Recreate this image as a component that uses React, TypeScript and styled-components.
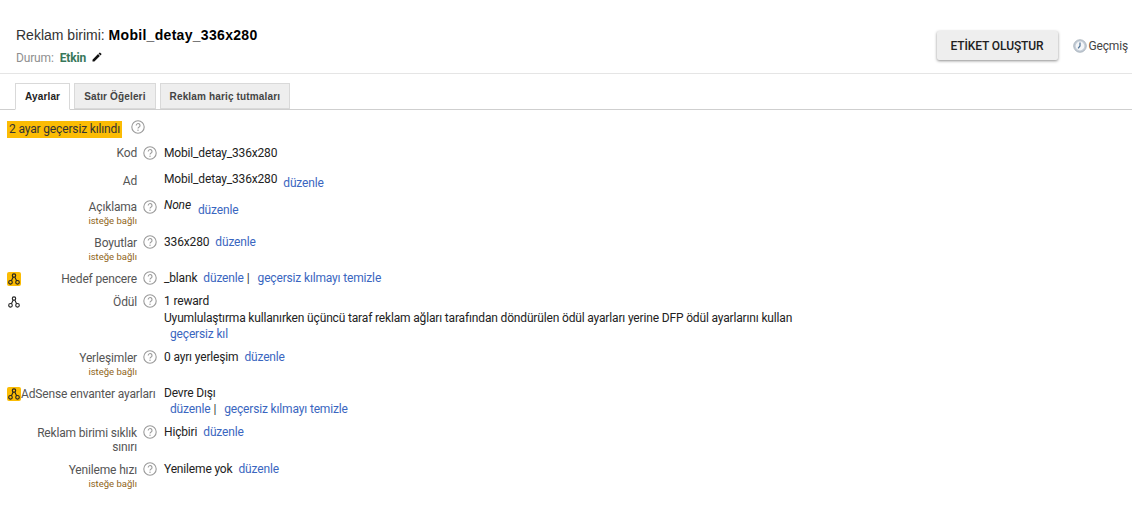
import React from "react";
import styled, { createGlobalStyle } from "styled-components";

const Global = createGlobalStyle`
  html, body { margin: 0; padding: 0; background: #fff; }
  body { font-family: Roboto, "Liberation Sans", sans-serif; font-size: 12px; color: #222; overflow: hidden; letter-spacing: -0.16px; }
`;
const Page = styled.div`width: 1132px; height: 526px; overflow: hidden; background: #fff;`;
const Header = styled.header`
  height: 74px; box-sizing: border-box; border-bottom: 1px solid #e5e5e5;
  display: flex; justify-content: space-between; padding: 26px 4px 0 16px;
`;
const TitleBlock = styled.div`display: flex; flex-direction: column; gap: 7px;`;
const Title = styled.div`font-size: 14px; line-height: 18px; color: #333; font-family: "Liberation Sans", Arial, sans-serif; letter-spacing: 0;`;
const TitleName = styled.b`color: #000; letter-spacing: 0.3px;`;
const Status = styled.div`font-size: 12px; line-height: 14px; color: #8f8f8f; display: flex; align-items: center; gap: 6px;`;
const StatusValue = styled.b`color: #38775a; font-weight: 700;`;
const Actions = styled.div`display: flex; align-items: flex-start; gap: 15px; margin-top: 5px;`;
const CreateButton = styled.button`
  width: 121px; height: 29px; border: 0; border-radius: 2px; background: #eeeeee; color: #212121;
  font: 500 12px Roboto, sans-serif; letter-spacing: -0.1px; box-shadow: 0 1px 3px rgba(0,0,0,.45); padding: 0;
`;
const History = styled.div`display: flex; align-items: center; gap: 2px; height: 29px; color: #444; font-size: 12px;`;
const Tabs = styled.nav`
  height: 36px; box-sizing: border-box; border-bottom: 1px solid #cfcfcf; padding: 9px 0 0 15px;
  display: flex; align-items: flex-start; gap: 4px;
`;
const Tab = styled.div<{ $active?: boolean }>`
  height: ${p => (p.$active ? 27 : 26)}px; box-sizing: border-box; padding: 0 9px;
  display: flex; align-items: center; font: 700 10px "Liberation Sans", Arial, sans-serif; letter-spacing: .15px;
  border: 1px solid #d9d9d9; color: ${p => (p.$active ? "#222" : "#444")};
  background: ${p => (p.$active ? "#fff" : "#eeeeee")};
  ${p => p.$active && "border-bottom-color: #fff;"}
`;
const Content = styled.main`padding-top: 10px;`;
const Banner = styled.div`height: 26px; padding-left: 7px; display: flex; align-items: flex-start; gap: 9px;`;
const Override = styled.span`background: #fbbc04; color: #333; line-height: 17px; height: 17px; padding: 0 2px; margin-top: 1px; letter-spacing: -.15px;`;
const Badge = styled.span<{ $on?: boolean }>`
  width: 14px; height: 14px; border-radius: 2px; display: flex; align-items: center; justify-content: center;
  background: ${p => (p.$on ? "#fbbc04" : "transparent")};
`;
const Label = styled.div`text-align: right; color: #555; line-height: 14px;`;
const WideLabel = styled.div`grid-column: span 2; color: #555; white-space: nowrap;`;
const Optional = styled.div`font-size: 9.5px; line-height: 12px; color: #8f6420; margin-top: 1px; letter-spacing: 0;`;
const HelpSlot = styled.span`padding-left: 6px; display: block; height: 14px;`;
const Value = styled.div`color: #222; white-space: nowrap; line-height: 14px;`;
const Row = styled.section<{ $h: number; $raised?: boolean }>`
  display: grid; grid-template-columns: 14px 116px 27px 1fr; min-height: ${p => p.$h}px;
  padding-left: 7px; align-content: start; line-height: 14px;
  ${HelpSlot}, ${Value} { margin-top: ${p => (p.$raised ? -1 : 0)}px; }
`;
const Line = styled.div<{ $indent?: boolean; $top?: number }>`
  display: flex; align-items: flex-start; margin-left: ${p => (p.$indent ? 6 : 0)}px; margin-top: ${p => p.$top ?? 0}px;
`;
const Edit = styled.a<{ $left?: number; $drop?: number }>`
  color: #3a66c0; margin-left: ${p => p.$left ?? 6}px; margin-top: ${p => p.$drop ?? 0}px; cursor: pointer;
`;
const Sep = styled.span`margin-left: 3px; color: #333;`;
const Italic = styled.span`font-style: italic; width: 28px; overflow: hidden; display: inline-block; margin-top: -2px;`;

const Help = ({ size = 14 }: { size?: number }) => (
  <svg width={size} height={size} viewBox="0 0 14 14">
    <circle cx="7" cy="7" r="6.2" fill="none" stroke="#9a9a9a" strokeWidth="1.1" />
    <path d="M5.2 5.5a1.9 1.9 0 1 1 2.9 1.6c-.7.4-1.1.8-1.1 1.5" fill="none" stroke="#9a9a9a" strokeWidth="1.1" />
    <circle cx="7" cy="10.3" r=".7" fill="#9a9a9a" />
  </svg>
);
const Nodes = () => (
  <svg width="12" height="12" viewBox="0 0 12 12" fill="none" stroke="#222" strokeWidth="1.1">
    <circle cx="6" cy="2.6" r="1.7" />
    <circle cx="2.5" cy="9.3" r="1.8" />
    <circle cx="9.5" cy="9.3" r="1.8" />
    <path d="M5.2 4.1 3.4 7.7M6.8 4.1l1.8 3.6" />
  </svg>
);
const Pencil = () => (
  <svg width="12" height="12" viewBox="0 0 24 24" fill="#111" style={{ marginLeft: -1, marginTop: -3 }}>
    <path d="M3 17.25V21h3.75L17.81 9.94l-3.75-3.75L3 17.25zM20.71 7.04a1 1 0 0 0 0-1.41l-2.34-2.34a1 1 0 0 0-1.41 0l-1.83 1.83 3.75 3.75 1.83-1.83z" />
  </svg>
);
const Clock = () => (
  <svg width="14" height="14" viewBox="0 0 14 14">
    <circle cx="7" cy="7" r="6.3" fill="#c3ccd6" stroke="#a3adb8" strokeWidth=".8" />
    <circle cx="7" cy="7" r="4.4" fill="#f4f6f8" />
    <path d="M7 3.6V7l-1.9 2.3" fill="none" stroke="#4f7296" strokeWidth="1.2" />
  </svg>
);

export default function App() {
  return (
    <Page>
      <Global />
      <Header>
        <TitleBlock>
          <Title>Reklam birimi: <TitleName>Mobil_detay_336x280</TitleName></Title>
          <Status>Durum: <StatusValue>Etkin</StatusValue> <Pencil /></Status>
        </TitleBlock>
        <Actions>
          <CreateButton>ETİKET OLUŞTUR</CreateButton>
          <History><Clock />Geçmiş</History>
        </Actions>
      </Header>
      <Tabs>
        <Tab $active>Ayarlar</Tab>
        <Tab>Satır Öğeleri</Tab>
        <Tab>Reklam hariç tutmaları</Tab>
      </Tabs>
      <Content>
        <Banner>
          <Override>2 ayar geçersiz kılındı</Override>
          <Help />
        </Banner>
        <Row $h={28}>
          <Badge /><Label>Kod</Label><HelpSlot><Help /></HelpSlot>
          <Value>Mobil_detay_336x280</Value>
        </Row>
        <Row $h={26}>
          <Badge /><Label>Ad</Label><HelpSlot />
          <Value><Line style={{ marginTop: -2 }}>Mobil_detay_336x280<Edit $drop={4}>düzenle</Edit></Line></Value>
        </Row>
        <Row $h={36}>
          <Badge /><Label>Açıklama<Optional>isteğe bağlı</Optional></Label><HelpSlot><Help /></HelpSlot>
          <Value><Line><Italic>None</Italic><Edit $drop={3}>düzenle</Edit></Line></Value>
        </Row>
        <Row $h={36} $raised>
          <Badge /><Label>Boyutlar<Optional>isteğe bağlı</Optional></Label><HelpSlot><Help /></HelpSlot>
          <Value><Line>336x280<Edit>düzenle</Edit></Line></Value>
        </Row>
        <Row $h={23} $raised>
          <Badge $on><Nodes /></Badge><Label>Hedef pencere</Label><HelpSlot><Help /></HelpSlot>
          <Value><Line>_blank<Edit>düzenle</Edit><Sep>|</Sep><Edit $left={8}>geçersiz kılmayı temizle</Edit></Line></Value>
        </Row>
        <Row $h={56} $raised>
          <Badge><Nodes /></Badge><Label>Ödül</Label><HelpSlot><Help /></HelpSlot>
          <Value>
            <Line>1 reward</Line>
            <Line $top={3}>Uyumlulaştırma kullanırken üçüncü taraf reklam ağları tarafından döndürülen ödül ayarları yerine DFP ödül ayarlarını kullan</Line>
            <Line $indent $top={2}><Edit $left={0}>geçersiz kıl</Edit></Line>
          </Value>
        </Row>
        <Row $h={36} $raised>
          <Badge /><Label>Yerleşimler<Optional>isteğe bağlı</Optional></Label><HelpSlot><Help /></HelpSlot>
          <Value><Line>0 ayrı yerleşim<Edit>düzenle</Edit></Line></Value>
        </Row>
        <Row $h={39} $raised>
          <Badge $on><Nodes /></Badge><WideLabel>AdSense envanter ayarları</WideLabel>
          <Value>
            <Line>Devre Dışı</Line>
            <Line $indent $top={2}><Edit $left={0}>düzenle</Edit><Sep>|</Sep><Edit $left={8}>geçersiz kılmayı temizle</Edit></Line>
          </Value>
        </Row>
        <Row $h={37} $raised>
          <Badge /><Label>Reklam birimi sıklık sınırı</Label><HelpSlot><Help /></HelpSlot>
          <Value><Line>Hiçbiri<Edit>düzenle</Edit></Line></Value>
        </Row>
        <Row $h={36} $raised>
          <Badge /><Label>Yenileme hızı<Optional>isteğe bağlı</Optional></Label><HelpSlot><Help /></HelpSlot>
          <Value><Line>Yenileme yok<Edit>düzenle</Edit></Line></Value>
        </Row>
      </Content>
    </Page>
  );
}
